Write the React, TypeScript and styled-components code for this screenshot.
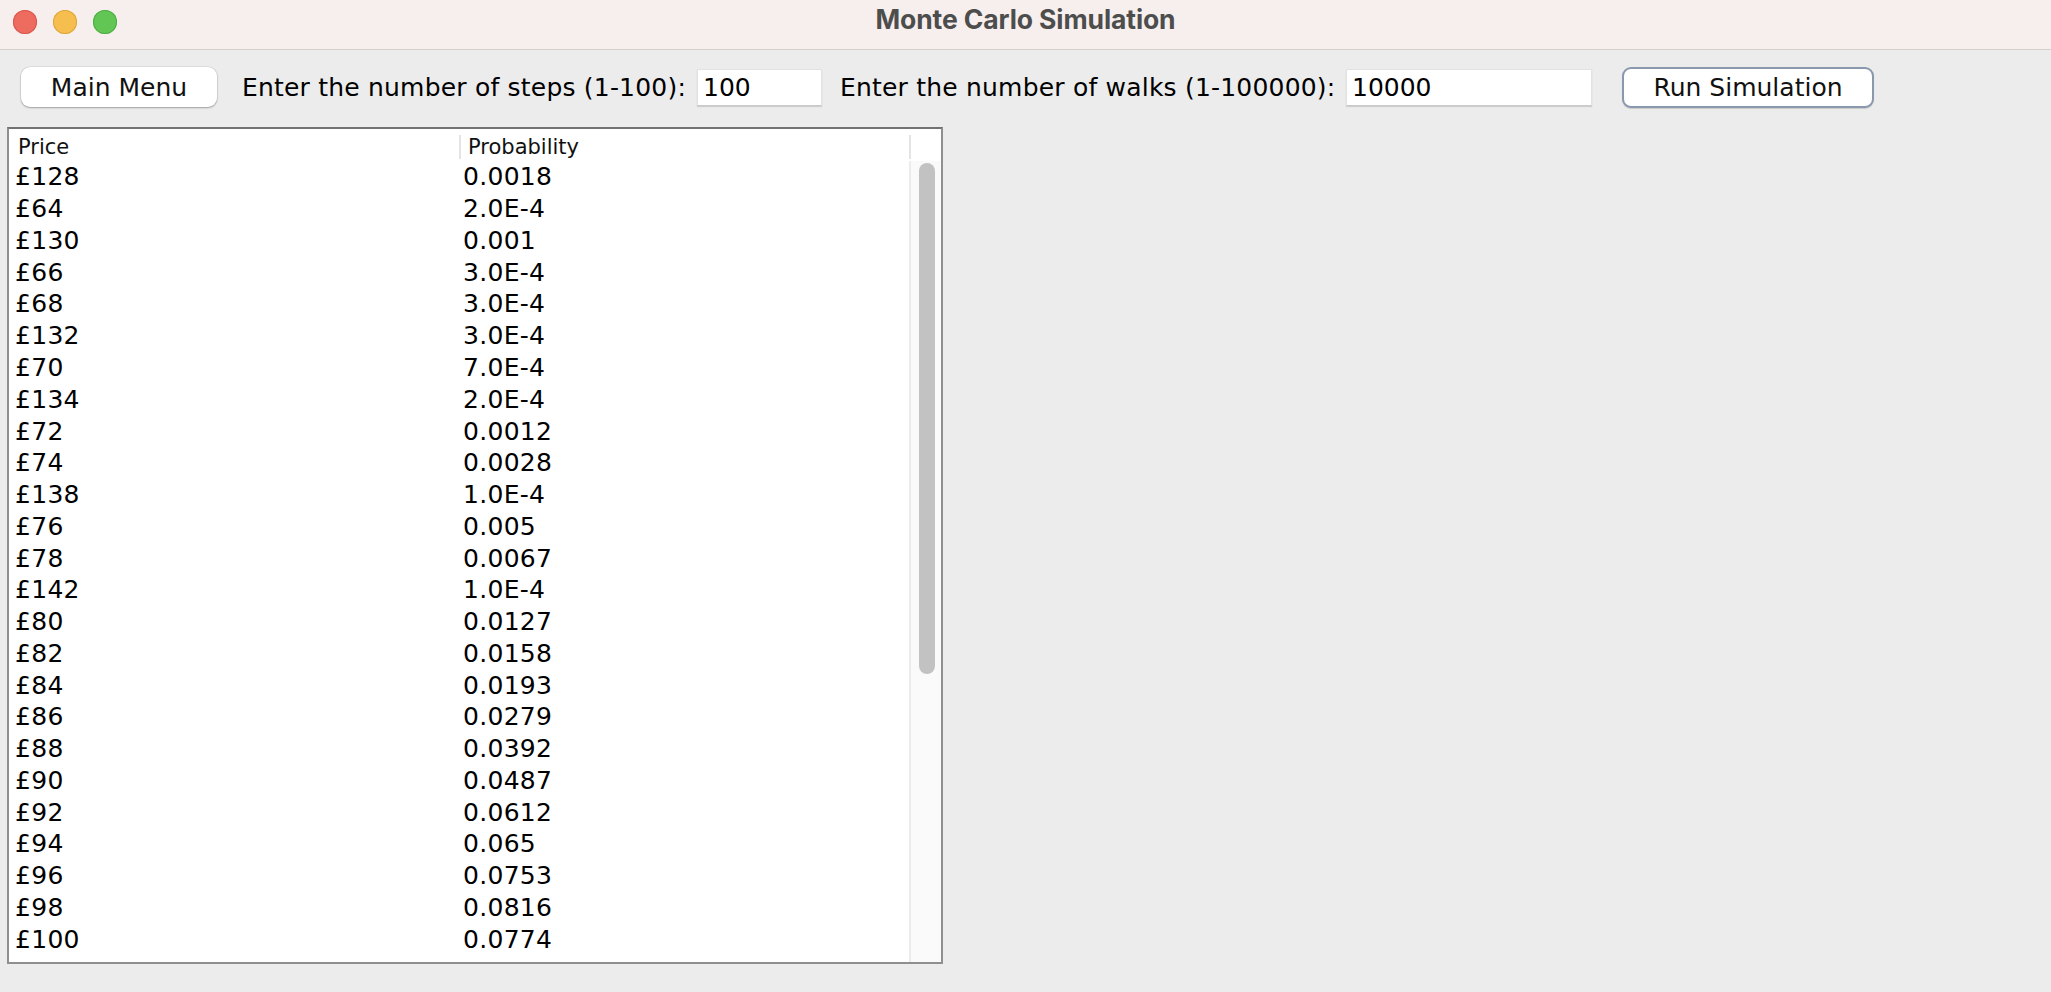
import React from "react";
import styled, { createGlobalStyle } from "styled-components";

const GlobalStyle = createGlobalStyle`
  html, body {
    margin: 0;
    padding: 0;
    background: #ececec;
    overflow: hidden;
  }
  * { box-sizing: border-box; }
`;

const Window = styled.div`
  width: 100vw;
  height: 100vh;
  display: flex;
  flex-direction: column;
  background: #ececec;
  font-family: "DejaVu Sans", "Liberation Sans", sans-serif;
  color: #000;
`;

const TitleBar = styled.div`
  height: 50px;
  flex: none;
  display: grid;
  grid-template-columns: 1fr auto 1fr;
  align-items: center;
  background: #f7efed;
  border-bottom: 1px solid #d3cdcb;
  padding: 0 13px 6px;
`;

const Lights = styled.div`
  display: flex;
  gap: 16px;
`;

const Light = styled.span<{ $fill: string; $edge: string }>`
  width: 24px;
  height: 24px;
  border-radius: 50%;
  background: ${(p) => p.$fill};
  box-shadow: inset 0 0 0 1px ${(p) => p.$edge};
`;

const Title = styled.div`
  font-family: Inter, "Liberation Sans", sans-serif;
  font-weight: 700;
  font-size: 26.5px;
  color: #4d4d4d;
  letter-spacing: -0.1px;
  margin-bottom: 5px;
`;

const Toolbar = styled.div`
  display: flex;
  align-items: center;
  padding: 17px 0 0 21px;
  height: 57px;
  flex: none;
`;

const PushButton = styled.button<{ $width: number; $default?: boolean }>`
  width: ${(p) => p.$width}px;
  height: ${(p) => (p.$default ? 41 : 40)}px;
  flex: none;
  border-radius: 9px;
  font-family: "DejaVu Sans", sans-serif;
  font-size: 25px;
  color: #111;
  padding: 0;
  background: #ffffff;
  border: ${(p) => (p.$default ? "2px solid #8a98ae" : "none")};
  box-shadow: ${(p) =>
    p.$default
      ? "0 1px 1px rgba(0,0,0,0.15)"
      : "0 1px 2px rgba(0,0,0,0.28), 0 0 0 0.5px rgba(0,0,0,0.12)"};
`;

const Label = styled.span<{ $width: number; $gap: number }>`
  width: ${(p) => p.$width}px;
  margin-left: ${(p) => p.$gap}px;
  flex: none;
  white-space: nowrap;
  font-size: 25px;
  letter-spacing: 0.2px;
`;

const Field = styled.input<{ $width: number; $gap: number; $after: number }>`
  width: ${(p) => p.$width}px;
  height: 37px;
  flex: none;
  margin-left: ${(p) => p.$gap}px;
  margin-right: ${(p) => p.$after}px;
  padding: 0 5px;
  font-family: "DejaVu Sans", sans-serif;
  font-size: 25px;
  color: #000;
  background: #fff;
  border: 1px solid #e2e2e2;
  border-bottom-color: #c9c9c9;
  border-radius: 0;
  outline: none;
  box-shadow: 0 1px 1px rgba(0, 0, 0, 0.12);
`;

const TableFrame = styled.div`
  margin: 20px 0 0 7px;
  width: 936px;
  height: 837px;
  flex: none;
  display: flex;
  flex-direction: column;
  background: #fff;
  border: 2px solid #8f8f8f;
  border-top-color: #727272;
  overflow: hidden;
`;

const HeaderRow = styled.div`
  height: 32px;
  flex: none;
  display: grid;
  grid-template-columns: 450px 450px 1fr;
`;

const HeaderCell = styled.div<{ $sep?: boolean }>`
  margin: 6px 0 4px;
  display: flex;
  align-items: center;
  padding-left: ${(p) => (p.$sep ? 7 : 9)}px;
  border-left: ${(p) => (p.$sep ? "2px solid #e4e4e4" : "none")};
  font-size: 21px;
  color: #111;
`;

const Body = styled.div`
  flex: 1;
  display: flex;
  min-height: 0;
`;

const Rows = styled.div`
  width: 900px;
  flex: none;
  overflow: hidden;
`;

const Row = styled.div`
  height: 31.77px;
  display: grid;
  grid-template-columns: 450px 450px;
  align-items: center;
  font-size: 25px;
  letter-spacing: 0.3px;
`;

const Cell = styled.div<{ $pad: number }>`
  padding-left: ${(p) => p.$pad}px;
  white-space: nowrap;
`;

const ScrollTrack = styled.div`
  flex: 1;
  background: #fafafa;
  border-left: 2px solid #ececec;
  padding: 2px 6px 0 8px;
`;

const Thumb = styled.div`
  height: 511px;
  border-radius: 8px;
  background: #c2c2c2;
`;

const data: [string, string][] = [
  ["£128", "0.0018"],
  ["£64", "2.0E-4"],
  ["£130", "0.001"],
  ["£66", "3.0E-4"],
  ["£68", "3.0E-4"],
  ["£132", "3.0E-4"],
  ["£70", "7.0E-4"],
  ["£134", "2.0E-4"],
  ["£72", "0.0012"],
  ["£74", "0.0028"],
  ["£138", "1.0E-4"],
  ["£76", "0.005"],
  ["£78", "0.0067"],
  ["£142", "1.0E-4"],
  ["£80", "0.0127"],
  ["£82", "0.0158"],
  ["£84", "0.0193"],
  ["£86", "0.0279"],
  ["£88", "0.0392"],
  ["£90", "0.0487"],
  ["£92", "0.0612"],
  ["£94", "0.065"],
  ["£96", "0.0753"],
  ["£98", "0.0816"],
  ["£100", "0.0774"],
];

export default function App() {
  return (
    <>
      <GlobalStyle />
      <Window>
        <TitleBar>
          <Lights>
            <Light $fill="#ee6b60" $edge="#d9574d" />
            <Light $fill="#f6be4f" $edge="#dea63a" />
            <Light $fill="#62c655" $edge="#4fae43" />
          </Lights>
          <Title>Monte Carlo Simulation</Title>
          <span />
        </TitleBar>
        <Toolbar>
          <PushButton $width={196}>Main Menu</PushButton>
          <Label $width={447} $gap={25}>
            Enter the number of steps (1-100):
          </Label>
          <Field $width={125} $gap={8} $after={0} defaultValue="100" />
          <Label $width={489} $gap={18}>
            Enter the number of walks (1-100000):
          </Label>
          <Field $width={246} $gap={17} $after={30} defaultValue="10000" />
          <PushButton $width={252} $default>
            Run Simulation
          </PushButton>
        </Toolbar>
        <TableFrame>
          <HeaderRow>
            <HeaderCell>Price</HeaderCell>
            <HeaderCell $sep>Probability</HeaderCell>
            <HeaderCell $sep />
          </HeaderRow>
          <Body>
            <Rows>
              {data.map(([price, prob], i) => (
                <Row key={i}>
                  <Cell $pad={6}>{price}</Cell>
                  <Cell $pad={4}>{prob}</Cell>
                </Row>
              ))}
            </Rows>
            <ScrollTrack>
              <Thumb />
            </ScrollTrack>
          </Body>
        </TableFrame>
      </Window>
    </>
  );
}
